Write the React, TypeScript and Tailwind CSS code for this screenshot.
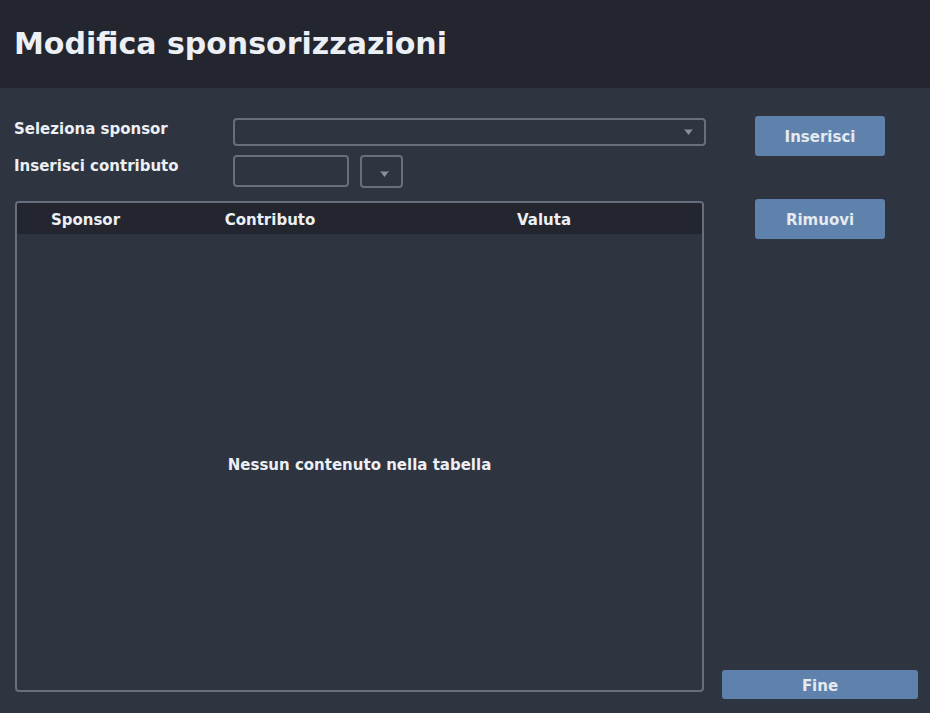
import React from "react";

function Arrow() {
  return (
    <svg width="9" height="6" viewBox="0 0 9 6" className="block">
      <polygon points="0,0 9,0 4.5,6" fill="#8b909a" />
      <polygon points="0,0 9,0 8,1 1,1" fill="#5b606b" />
    </svg>
  );
}

export default function App() {
  return (
    <div
      className="w-[930px] h-[713px] bg-[#2e3440] text-[#eceff4] flex flex-col overflow-hidden"
      style={{ fontFamily: '"DejaVu Sans", sans-serif' }}
    >
      <div className="h-[88px] shrink-0 bg-[#23262f] flex items-center pl-[14px]">
        <h1 className="text-[30px] font-bold leading-none mb-[1px]">Modifica sponsorizzazioni</h1>
      </div>
      <div className="flex-1 flex min-h-0">
        <div className="w-[706px] shrink-0 flex flex-col pl-[14px] pt-[30px] pb-[21px]">
          <div className="flex items-start h-[28px]">
            <div className="w-[219px] text-[15px] font-bold leading-none pt-[4px]">Seleziona sponsor</div>
            <div className="flex-1 h-[28px] border-2 border-[#676e7c] rounded-[4px] flex items-center justify-end pr-[11px]">
              <Arrow />
            </div>
          </div>
          <div className="flex items-start mt-[9px] h-[33px]">
            <div className="w-[219px] text-[15px] font-bold leading-none pt-[4px]">Inserisci contributo</div>
            <div className="w-[116px] h-[32px] border-2 border-[#676e7c] rounded-[4px]" />
            <div className="ml-[11px] w-[43px] h-[33px] border-2 border-[#676e7c] rounded-[4px] flex items-center justify-end pr-[12px] pt-[5px]">
              <Arrow />
            </div>
          </div>
          <div className="mt-[13px] ml-[1px] w-[689px] flex-1 border-2 border-[#676e7c] rounded-[4px] flex flex-col overflow-hidden">
            <div className="h-[31px] shrink-0 bg-[#23262f] grid grid-cols-[137px_232px_1fr] items-center text-[15px] font-bold pt-[4px]">
              <div className="text-center">Sponsor</div>
              <div className="text-center">Contributo</div>
              <div className="text-center">Valuta</div>
            </div>
            <div className="flex-1 flex items-center justify-center text-[15px] font-bold pt-[7px]">
              Nessun contenuto nella tabella
            </div>
          </div>
        </div>
        <div className="flex-1 flex flex-col pt-[28px] pb-[14px]">
          <button className="ml-[49px] w-[130px] h-[40px] bg-[#5f82ad] rounded-[3px] text-[15px] font-bold text-[#e5e9f0] pt-[3px]">
            Inserisci
          </button>
          <button className="ml-[49px] mt-[43px] w-[130px] h-[40px] bg-[#5f82ad] rounded-[3px] text-[15px] font-bold text-[#e5e9f0] pt-[3px]">
            Rimuovi
          </button>
          <div className="flex-1" />
          <button className="ml-[16px] w-[196px] h-[29px] bg-[#5f82ad] rounded-[3px] text-[15px] font-bold text-[#e5e9f0] pt-[3px]">
            Fine
          </button>
        </div>
      </div>
    </div>
  );
}
